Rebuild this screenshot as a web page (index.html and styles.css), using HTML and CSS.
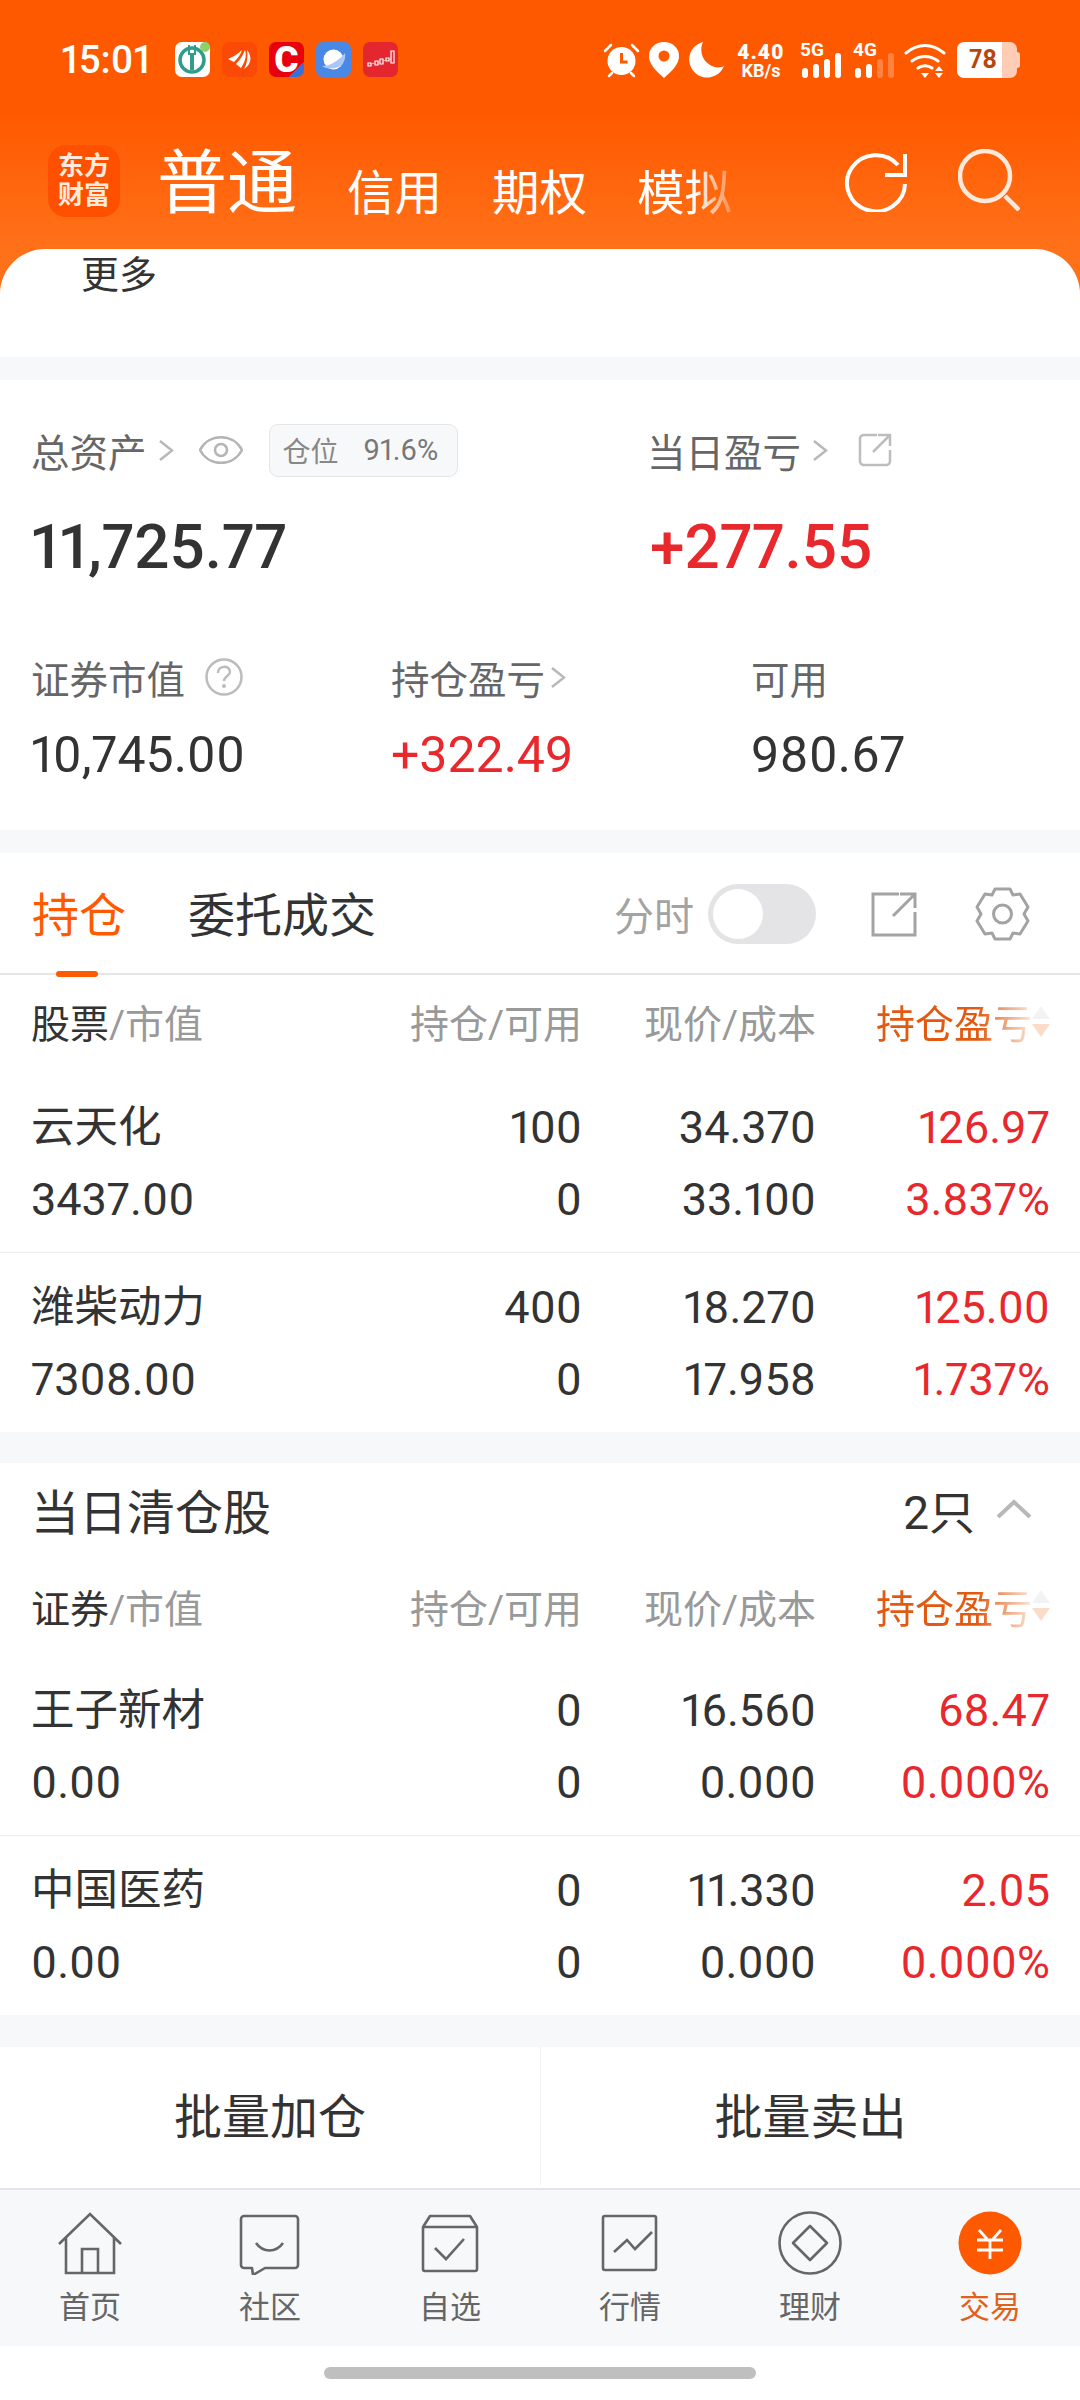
FILE: index.html
```html
<!DOCTYPE html>
<html lang="zh-CN">
<head>
    <meta charset="UTF-8">
    <meta name="viewport" content="width=device-width, initial-scale=1.0">
    <title>交易</title>
    <link rel="stylesheet" href="styles.css">
</head>
<body>

<div class="top">
    <!-- status bar -->
    <div class="status">
        <span class="time">15:01</span>
        <div class="apps">
            <svg class="app" viewBox="0 0 35 35"><rect width="35" height="35" rx="7" fill="#fff"/><circle cx="17" cy="18" r="12" fill="none" stroke="#2f9c8c" stroke-width="3.500"/><path d="M13 3h2v8h4V3h2v10h-2v15h-4V13h-2z" fill="#2f9c8c"/><circle cx="30" cy="5" r="5" fill="#8fd06a"/></svg>
            <svg class="app" viewBox="0 0 35 35"><rect width="35" height="35" rx="7" fill="#fb4a06"/><path d="M6 17C11 15 16 12 20 8 19 12 16 16 12 20zM14 22C18 18 21 13 23 8 25 14 23 20 19 26zM22 27C25 22 26 15 25 8 30 14 30 22 22 27z" fill="#fff"/></svg>
            <div class="app app-c">C</div>
            <svg class="app" viewBox="0 0 35 35"><rect width="35" height="35" rx="7" fill="#4a88e6"/><circle cx="17.500" cy="17.500" r="10" fill="#fff"/><path d="M6 24c6 1 18-6 23-13 1 5-1 9-3 12-5 4-14 5-20 1z" fill="#a9c8f5"/></svg>
            <svg class="app" viewBox="0 0 35 35"><rect width="35" height="35" rx="7" fill="#e4262e"/><path d="M5 21h3v3H5zM12 19h3v4h-3zM17 17h3v5h-3zM23 16h3v3h-3zM28 9h3v12h-3z" stroke="#fff" stroke-width="1.200" fill="none"/><path d="M8 22l4-1M15 21l2-1M20 19l3-1M26 18l2-1" stroke="#ffb5b5" stroke-width="1"/></svg>
        </div>
        <div class="sys">
            <svg class="sys-alarm" viewBox="0 0 37 36"><circle cx="18.500" cy="19" r="14" fill="#fff"/><path d="M18.500 11v9h6" fill="none" stroke="#ff5900" stroke-width="3"/><path d="M2 9l6-6M35 9l-6-6M6 34l3-3M31 34l-3-3" stroke="#fff" stroke-width="2.500" stroke-linecap="round"/></svg>
            <svg class="sys-pin" viewBox="0 0 30 36"><path d="M15 36C6 28 0 22 0 14a15 14 0 0 1 30 0c0 8-6 14-15 22z" fill="#fff"/><circle cx="15" cy="14" r="5.500" fill="#ff5900"/></svg>
            <svg class="sys-moon" viewBox="0 0 36 36"><path d="M15 0a18 18 0 1 0 21 24C24 30 8 16 15 0z" fill="#fff"/></svg>
            <div class="speed"><b>4.40</b><span>KB/s</span></div>
            <div class="signal">
                <span class="net">5G</span>
                <div class="bars"><i class="b1"></i><i class="b2"></i><i class="b3"></i><i class="b4"></i></div>
            </div>
            <div class="signal">
                <span class="net">4G</span>
                <div class="bars"><i class="b1"></i><i class="b2"></i><i class="b3 off"></i><i class="b4 off"></i></div>
            </div>
            <svg class="sys-wifi" viewBox="0 0 44 36"><path d="M2 11C14 1 28 1 40 11M8 19c8-6 18-6 26 0M14 26c4-3 10-3 14 0" fill="none" stroke="#fff" stroke-width="3" stroke-linecap="round"/><path d="M17 31h8l-4 5zM35 24l4 5h-8zM35 36l-4-5h8z" fill="#fff"/></svg>
            <div class="battery"><span>78</span></div>
        </div>
    </div>

    <!-- account tabs -->
    <div class="head">
        <div class="logo">东方<br>财富</div>
        <div class="acct-active">普通</div>
        <div class="acct">信用</div>
        <div class="acct">期权</div>
        <div class="acct acct-fade">模拟</div>
        <svg class="head-refresh" viewBox="0 0 62 60"><path d="M53 13A29 28 0 1 0 60 32" fill="none" stroke="#fff" stroke-width="4"/><path d="M60 2v21H40" fill="none" stroke="#fff" stroke-width="4"/></svg>
        <svg class="head-search" viewBox="0 0 62 62"><circle cx="27" cy="27" r="25" fill="none" stroke="#ffe9dc" stroke-width="4.500"/><path d="M47 47l14 14" stroke="#ffe9dc" stroke-width="4.500"/></svg>
    </div>

    <div class="more-card">更多</div>
</div>

<div class="gap gap-a"></div>

<!-- assets -->
<div class="summary">
    <div class="sum-row">
        <div class="sum-main">
            <div class="label">总资产<svg class="chev" viewBox="0 0 15 21"><path d="M1 1l12 9.500L1 20" fill="none" stroke="#b8b8b8" stroke-width="2.500"/></svg>
                <svg class="eye" viewBox="0 0 44 30"><path d="M1 15C10 -2 34 -2 43 15 34 32 10 32 1 15z" fill="none" stroke="#b4b4b4" stroke-width="2.500"/><circle cx="22" cy="15" r="6" fill="none" stroke="#b4b4b4" stroke-width="2.500"/></svg>
                <div class="badge"><span class="badge-key">仓位</span><span class="badge-val">91.6%</span></div>
            </div>
            <div class="value-big">11,725.77</div>
        </div>
        <div>
            <div class="label">当日盈亏<svg class="chev" viewBox="0 0 15 21"><path d="M1 1l12 9.500L1 20" fill="none" stroke="#b8b8b8" stroke-width="2.500"/></svg>
                <svg class="share" viewBox="0 0 34 34"><path d="M19 2H5a4 4 0 0 0-3 3v24a4 4 0 0 0 3 3h24a4 4 0 0 0 3-3V17" fill="none" stroke="#bdbdbd" stroke-width="2.500"/><path d="M15 19L31 3M20 2h12v11" fill="none" stroke="#bdbdbd" stroke-width="2.500"/></svg>
            </div>
            <div class="value-big value-day red">+277.55</div>
        </div>
    </div>
    <div class="sum-row sum-row-b">
        <div class="sum-col">
            <div class="label">证券市值<svg class="help" viewBox="0 0 38 38"><circle cx="19" cy="19" r="17.500" fill="none" stroke="#bcbcbc" stroke-width="2.500"/><path d="M13 15c0-8 12-8 12-1 0 4-6 4-6 9" fill="none" stroke="#bcbcbc" stroke-width="2.500"/><circle cx="19" cy="28" r="2" fill="#bcbcbc"/></svg></div>
            <div class="value">10,745.00</div>
        </div>
        <div class="sum-col">
            <div class="label">持仓盈亏<svg class="chev chev-near" viewBox="0 0 15 21"><path d="M1 1l12 9.500L1 20" fill="none" stroke="#b8b8b8" stroke-width="2.500"/></svg></div>
            <div class="value red">+322.49</div>
        </div>
        <div class="sum-col sum-col-last">
            <div class="label">可用</div>
            <div class="value">980.67</div>
        </div>
    </div>
</div>

<div class="gap gap-b"></div>

<!-- positions -->
<div class="tabs">
    <div class="tab tab-on">持仓</div>
    <div class="tab">委托成交</div>
    <div class="tabs-right">
        <span class="tabs-label">分时</span>
        <div class="toggle"><i></i></div>
        <svg class="tool-share" viewBox="0 0 46 45"><path d="M28 2H2v41h42V20" fill="none" stroke="#a3a3a3" stroke-width="3"/><path d="M22 24L43 3M29 2h15v14" fill="none" stroke="#a3a3a3" stroke-width="3"/></svg>
        <svg class="tool-gear" viewBox="0 0 55 54"><path d="M20 2h15l3 6 7-1 8 13-4 7 4 7-8 13-7-1-3 6H20l-3-6-7 1-8-13 4-7-4-7L10 7l7 1z" fill="none" stroke="#a3a3a3" stroke-width="3" stroke-linejoin="round"/><circle cx="27.500" cy="27" r="9" fill="none" stroke="#a3a3a3" stroke-width="3"/></svg>
    </div>
</div>

<div class="table">
    <div class="thead">
        <div><span class="th-dark">股票</span>/市值</div>
        <div class="num">持仓/可用</div>
        <div class="num">现价/成本</div>
        <div class="th-sort"><span>持仓盈亏</span><div class="sort"><i class="up"></i><i class="down"></i></div></div>
    </div>
    <div class="row">
        <div class="name">云天化</div><div class="num">100</div><div class="num">34.370</div><div class="num red">126.97</div>
        <div>3437.00</div><div class="num">0</div><div class="num">33.100</div><div class="num red">3.837%</div>
    </div>
    <div class="row row-last">
        <div class="name">潍柴动力</div><div class="num">400</div><div class="num">18.270</div><div class="num red">125.00</div>
        <div>7308.00</div><div class="num">0</div><div class="num">17.958</div><div class="num red">1.737%</div>
    </div>
</div>

<div class="gap gap-c"></div>

<!-- sold today -->
<div class="section-title">
    <span>当日清仓股</span>
    <span class="section-count">2只</span>
    <svg class="section-chev" viewBox="0 0 36 20"><path d="M2 18L18 3l16 15" fill="none" stroke="#b8b8b8" stroke-width="4"/></svg>
</div>

<div class="table">
    <div class="thead thead-b">
        <div><span class="th-dark">证券</span>/市值</div>
        <div class="num">持仓/可用</div>
        <div class="num">现价/成本</div>
        <div class="th-sort"><span>持仓盈亏</span><div class="sort"><i class="up"></i><i class="down"></i></div></div>
    </div>
    <div class="row">
        <div class="name">王子新材</div><div class="num">0</div><div class="num">16.560</div><div class="num red">68.47</div>
        <div>0.00</div><div class="num">0</div><div class="num">0.000</div><div class="num red">0.000%</div>
    </div>
    <div class="row row-last">
        <div class="name">中国医药</div><div class="num">0</div><div class="num">11.330</div><div class="num red">2.05</div>
        <div>0.00</div><div class="num">0</div><div class="num">0.000</div><div class="num red">0.000%</div>
    </div>
</div>

<div class="gap gap-d"></div>

<div class="actions">
    <div class="action">批量加仓</div>
    <div class="action action-right">批量卖出</div>
</div>

<!-- bottom nav -->
<div class="nav">
    <div class="nav-item">
        <svg class="nav-icon" viewBox="0 0 64 64"><path d="M1 33L32 3l31 30M8 27v35h48V27M24 62V38h16v24" fill="none" stroke="#666" stroke-width="2.600"/></svg>
        <span>首页</span>
    </div>
    <div class="nav-item">
        <svg class="nav-icon" viewBox="0 0 64 64"><path d="M6 5h51a3 3 0 0 1 3 3v46a3 3 0 0 1-3 3H27l-12 7-1-7H6a3 3 0 0 1-3-3V8a3 3 0 0 1 3-3z" fill="none" stroke="#666" stroke-width="2.600" stroke-linejoin="round"/><path d="M18 32c7 10 20 10 27 0" fill="none" stroke="#666" stroke-width="2.600"/></svg>
        <span>社区</span>
    </div>
    <div class="nav-item">
        <svg class="nav-icon" viewBox="0 0 64 64"><path d="M5 16l7-11h40l7 11M5 16h54v42a2 2 0 0 1-2 2H7a2 2 0 0 1-2-2z" fill="none" stroke="#666" stroke-width="2.600" stroke-linejoin="round"/><path d="M17 37l11 11 18-20" fill="none" stroke="#666" stroke-width="2.600"/></svg>
        <span>自选</span>
    </div>
    <div class="nav-item">
        <svg class="nav-icon" viewBox="0 0 64 64"><rect x="5" y="5" width="53" height="54" rx="2" fill="none" stroke="#666" stroke-width="2.600"/><path d="M16 41l13-12 8 9 17-17" fill="none" stroke="#666" stroke-width="2.600"/></svg>
        <span>行情</span>
    </div>
    <div class="nav-item">
        <svg class="nav-icon" viewBox="0 0 64 64"><circle cx="32" cy="32" r="30.500" fill="none" stroke="#666" stroke-width="2.600"/><path d="M32 15l17 17-17 17-17-17z" fill="none" stroke="#666" stroke-width="2.600" stroke-linejoin="round"/></svg>
        <span>理财</span>
    </div>
    <div class="nav-item nav-on">
        <svg class="nav-icon" viewBox="0 0 64 64"><circle cx="32" cy="32" r="31.500" fill="#ff5900"/><path d="M21 19l8 9M43 19l-8 9M19 29h26M19 39h26M32 28v20" fill="none" stroke="#fff" stroke-width="2.800"/></svg>
        <span>交易</span>
    </div>
</div>

<div class="home-bar"><i></i></div>

</body>
</html>
```

FILE: styles.css
```css
/* Global Styles */
* {
    box-sizing: border-box;
}

body {
    margin: 0;
    width: 1080px;
    background-color: #fff;
    color: #333;
    font-family: Roboto, "Noto Sans CJK SC", sans-serif;
    font-variant-numeric: proportional-nums;
}

.red {
    color: #e8282c;
}

.gap {
    background-color: #f7f8fa;
}

.gap-a { height: 23px; }
.gap-b { height: 23px; }
.gap-c { height: 31px; }
.gap-d { height: 32px; }

/* Header */
.top {
    height: 357px;
    background: linear-gradient(#ff5900 0, #ff5900 110px, #ff7119 249px, #ff7119 300px);
    color: #fff;
    display: flex;
    flex-direction: column;
}

.status {
    height: 145px;
    padding: 42px 63px 0 61px;
    display: flex;
    align-items: flex-start;
}

.time {
    font-size: 38.500px;
    font-weight: 500;
    line-height: 36px;
    width: 114px;
}

.apps {
    display: flex;
    gap: 12px;
}

.app {
    width: 35px;
    height: 35px;
    display: block;
}

.app-c {
    background: linear-gradient(135deg, #e8000f 78%, #3a6fd8 78%);
    border-radius: 7px;
    color: #fff;
    font-size: 37px;
    font-weight: 900;
    line-height: 35px;
    text-align: center;
}

.sys {
    margin-left: auto;
    display: flex;
    align-items: flex-start;
}

.sys-alarm { width: 37px; height: 36px; }
.sys-pin { width: 30px; height: 36px; margin-left: 9px; }
.sys-moon { width: 36px; height: 36px; margin-left: 9px; }
.sys-wifi { width: 44px; height: 36px; margin-left: 11px; }

.speed {
    width: 50px;
    margin-left: 12px;
    display: flex;
    flex-direction: column;
    align-items: center;
    font-weight: 700;
}

.speed b {
    font-size: 21px;
    line-height: 20px;
    letter-spacing: 1px;
}

.speed span {
    font-size: 18px;
    line-height: 17px;
}

.signal {
    width: 40px;
    height: 36px;
    margin-left: 14px;
    position: relative;
}

.net {
    display: block;
    font-size: 19px;
    font-weight: 700;
    line-height: 16px;
}

.bars {
    position: absolute;
    left: 2px;
    bottom: 0;
    display: flex;
    align-items: flex-end;
    gap: 5px;
}

.bars i {
    display: block;
    width: 6px;
    background-color: #fff;
    border-radius: 3px;
}

.bars .b1 { height: 10px; }
.bars .b2 { height: 14px; }
.bars .b3 { height: 19px; }
.bars .b4 { height: 25px; }
.bars .off { background-color: rgba(255, 255, 255, 0.25); }

.signal + .signal {
    margin-left: 13px;
}

.battery {
    width: 60px;
    height: 36px;
    margin-left: 9px;
    border-radius: 7px;
    background: linear-gradient(90deg, #fff 75%, #ffcdb6 75%);
    color: #b9440e;
    font-size: 25px;
    font-weight: 700;
    line-height: 36px;
    padding-left: 12px;
    position: relative;
}

.battery::after {
    content: "";
    position: absolute;
    right: -3px;
    top: 10px;
    width: 3px;
    height: 16px;
    border-radius: 0 3px 3px 0;
    background-color: #ffcdb6;
}

.head {
    height: 104px;
    padding: 0 60px 0 48px;
    display: flex;
    align-items: flex-start;
}

.logo {
    width: 72px;
    height: 72px;
    background-color: #ff5000;
    border-radius: 18px;
    color: #ffeadb;
    font-size: 26px;
    font-weight: 700;
    line-height: 29px;
    text-align: center;
    padding-top: 7px;
}

.acct-active {
    margin-left: 37px;
    margin-top: 3px;
    font-size: 70px;
    line-height: 72px;
}

.acct {
    margin-left: 50px;
    margin-top: 16px;
    font-size: 47.500px;
    line-height: 66px;
}

.acct-fade {
    -webkit-mask-image: linear-gradient(90deg, #000 60%, rgba(0, 0, 0, 0.25) 100%);
    mask-image: linear-gradient(90deg, #000 60%, rgba(0, 0, 0, 0.25) 100%);
}

.head-refresh {
    width: 62px;
    height: 60px;
    margin-left: auto;
    margin-top: 7px;
}

.head-search {
    width: 62px;
    height: 62px;
    margin-left: 51px;
    margin-top: 4px;
}

.more-card {
    flex: 1;
    background-color: #fff;
    border-radius: 45px 45px 0 0;
    color: #333;
    font-size: 38px;
    line-height: 40px;
    padding: 6px 0 0 81px;
}

/* Assets summary */
.summary {
    height: 450px;
    padding: 44px 0 0 31px;
}

.sum-row {
    display: flex;
}

.sum-main {
    width: 616px;
}

.sum-row-b {
    margin-top: 69px;
}

.sum-col {
    width: 360px;
    flex: none;
}

.sum-col-last {
    width: 300px;
}

.label {
    height: 52px;
    display: flex;
    align-items: center;
    font-size: 38.500px;
    color: #666;
}

.chev {
    width: 15px;
    height: 21px;
    margin-left: 12px;
}

.chev-near {
    margin-left: 6px;
}

.eye {
    width: 44px;
    height: 30px;
    margin-left: 25px;
}

.badge {
    width: 189px;
    height: 53px;
    margin-left: 26px;
    background-color: #f7f8fa;
    border: 1px solid #e6e6e6;
    border-radius: 9px;
    display: flex;
    align-items: center;
    padding-left: 13px;
    color: #888;
}

.badge-key {
    font-size: 28px;
}

.badge-val {
    font-size: 29px;
    margin-left: 25px;
    color: #777;
}

.share {
    width: 34px;
    height: 34px;
    margin-left: 30px;
}

.help {
    width: 38px;
    height: 38px;
    margin-left: 20px;
}

.value-big {
    margin-top: 36px;
    font-size: 62px;
    font-weight: 500;
    line-height: 70px;
}

.value-day {
    margin-left: 3px;
}

.value {
    margin-top: 23px;
    font-size: 50px;
    line-height: 58px;
}

/* Tabs */
.tabs {
    height: 122px;
    padding: 0 50px 0 32px;
    border-bottom: 2px solid #e5e5e5;
    display: flex;
    align-items: center;
    position: relative;
}

.tab {
    font-size: 47px;
    margin-right: 62px;
    line-height: 60px;
    position: relative;
    margin-top: 6px;
}

.tab-on {
    color: #ff5a00;
}

.tab-on::after {
    content: "";
    position: absolute;
    left: 24px;
    bottom: -31px;
    width: 42px;
    height: 6px;
    border-radius: 3px;
    background-color: #ff5a00;
}

.tabs-right {
    margin-left: auto;
    display: flex;
    align-items: center;
    margin-top: 2px;
}

.tabs-label {
    font-size: 40px;
    color: #a3a3a3;
}

.toggle {
    width: 108px;
    height: 60px;
    margin-left: 14px;
    border-radius: 30px;
    background-color: #e4e4e6;
    padding: 5px;
}

.toggle i {
    display: block;
    width: 50px;
    height: 50px;
    border-radius: 50%;
    background-color: #fff;
}

.tool-share {
    width: 46px;
    height: 45px;
    margin-left: 55px;
}

.tool-gear {
    width: 55px;
    height: 54px;
    margin-left: 58px;
}

/* Table */
.thead,
.row {
    display: grid;
    grid-template-columns: 1fr 220px 234px 234px;
    padding: 0 30px 0 31px;
}

.thead {
    height: 98px;
    padding-bottom: 6px;
    align-items: center;
    font-size: 39px;
    color: #999;
}

.thead-b {
    height: 95px;
}

.th-dark {
    color: #333;
}

.num {
    text-align: right;
}

.th-sort {
    display: flex;
    justify-content: flex-end;
    align-items: center;
    color: #e25a12;
}

.th-sort span {
    white-space: nowrap;
    -webkit-mask-image: linear-gradient(90deg, #000 65%, rgba(0, 0, 0, 0.15) 100%);
    mask-image: linear-gradient(90deg, #000 65%, rgba(0, 0, 0, 0.15) 100%);
}

.sort {
    width: 18px;
    display: flex;
    flex-direction: column;
    gap: 5px;
}

.sort i {
    display: block;
    width: 0;
    height: 0;
    border-left: 9px solid transparent;
    border-right: 9px solid transparent;
}

.sort .up {
    border-bottom: 13px solid #f2f3f4;
}

.sort .down {
    border-top: 13px solid #fbdccb;
}

.row {
    font-size: 45px;
    line-height: 72px;
    padding-top: 19px;
    padding-bottom: 16px;
    border-bottom: 1px solid #ececec;
}

.row-last {
    border-bottom: none;
}

.name {
    font-size: 43.500px;
}

.section-title {
    height: 98px;
    padding: 0 48px 6px 31px;
    display: flex;
    align-items: center;
    font-size: 48px;
}

.section-count {
    margin-left: auto;
    font-size: 46px;
}

.section-chev {
    width: 36px;
    height: 20px;
    margin-left: 21px;
}

/* Batch actions */
.actions {
    height: 138px;
    display: flex;
}

.action {
    width: 540px;
    padding-top: 4px;
    font-size: 48px;
    line-height: 134px;
    text-align: center;
}

.action-right {
    border-left: 1px solid #f0f0f0;
}

/* Bottom nav */
.nav {
    height: 158px;
    background-color: #f7f8fa;
    border-top: 2px solid #e4e5e8;
    margin-top: 3px;
    display: flex;
}

.nav-item {
    width: 180px;
    display: flex;
    flex-direction: column;
    align-items: center;
    padding-top: 21px;
    color: #666;
    font-size: 31px;
    line-height: 36px;
}

.nav-icon {
    width: 64px;
    height: 64px;
    margin-bottom: 15px;
}

.nav-on {
    color: #e2601a;
}

.home-bar {
    height: 54px;
    padding-top: 21px;
    display: flex;
    justify-content: center;
}

.home-bar i {
    display: block;
    width: 432px;
    height: 12px;
    border-radius: 6px;
    background-color: #bfbfbf;
}
```
